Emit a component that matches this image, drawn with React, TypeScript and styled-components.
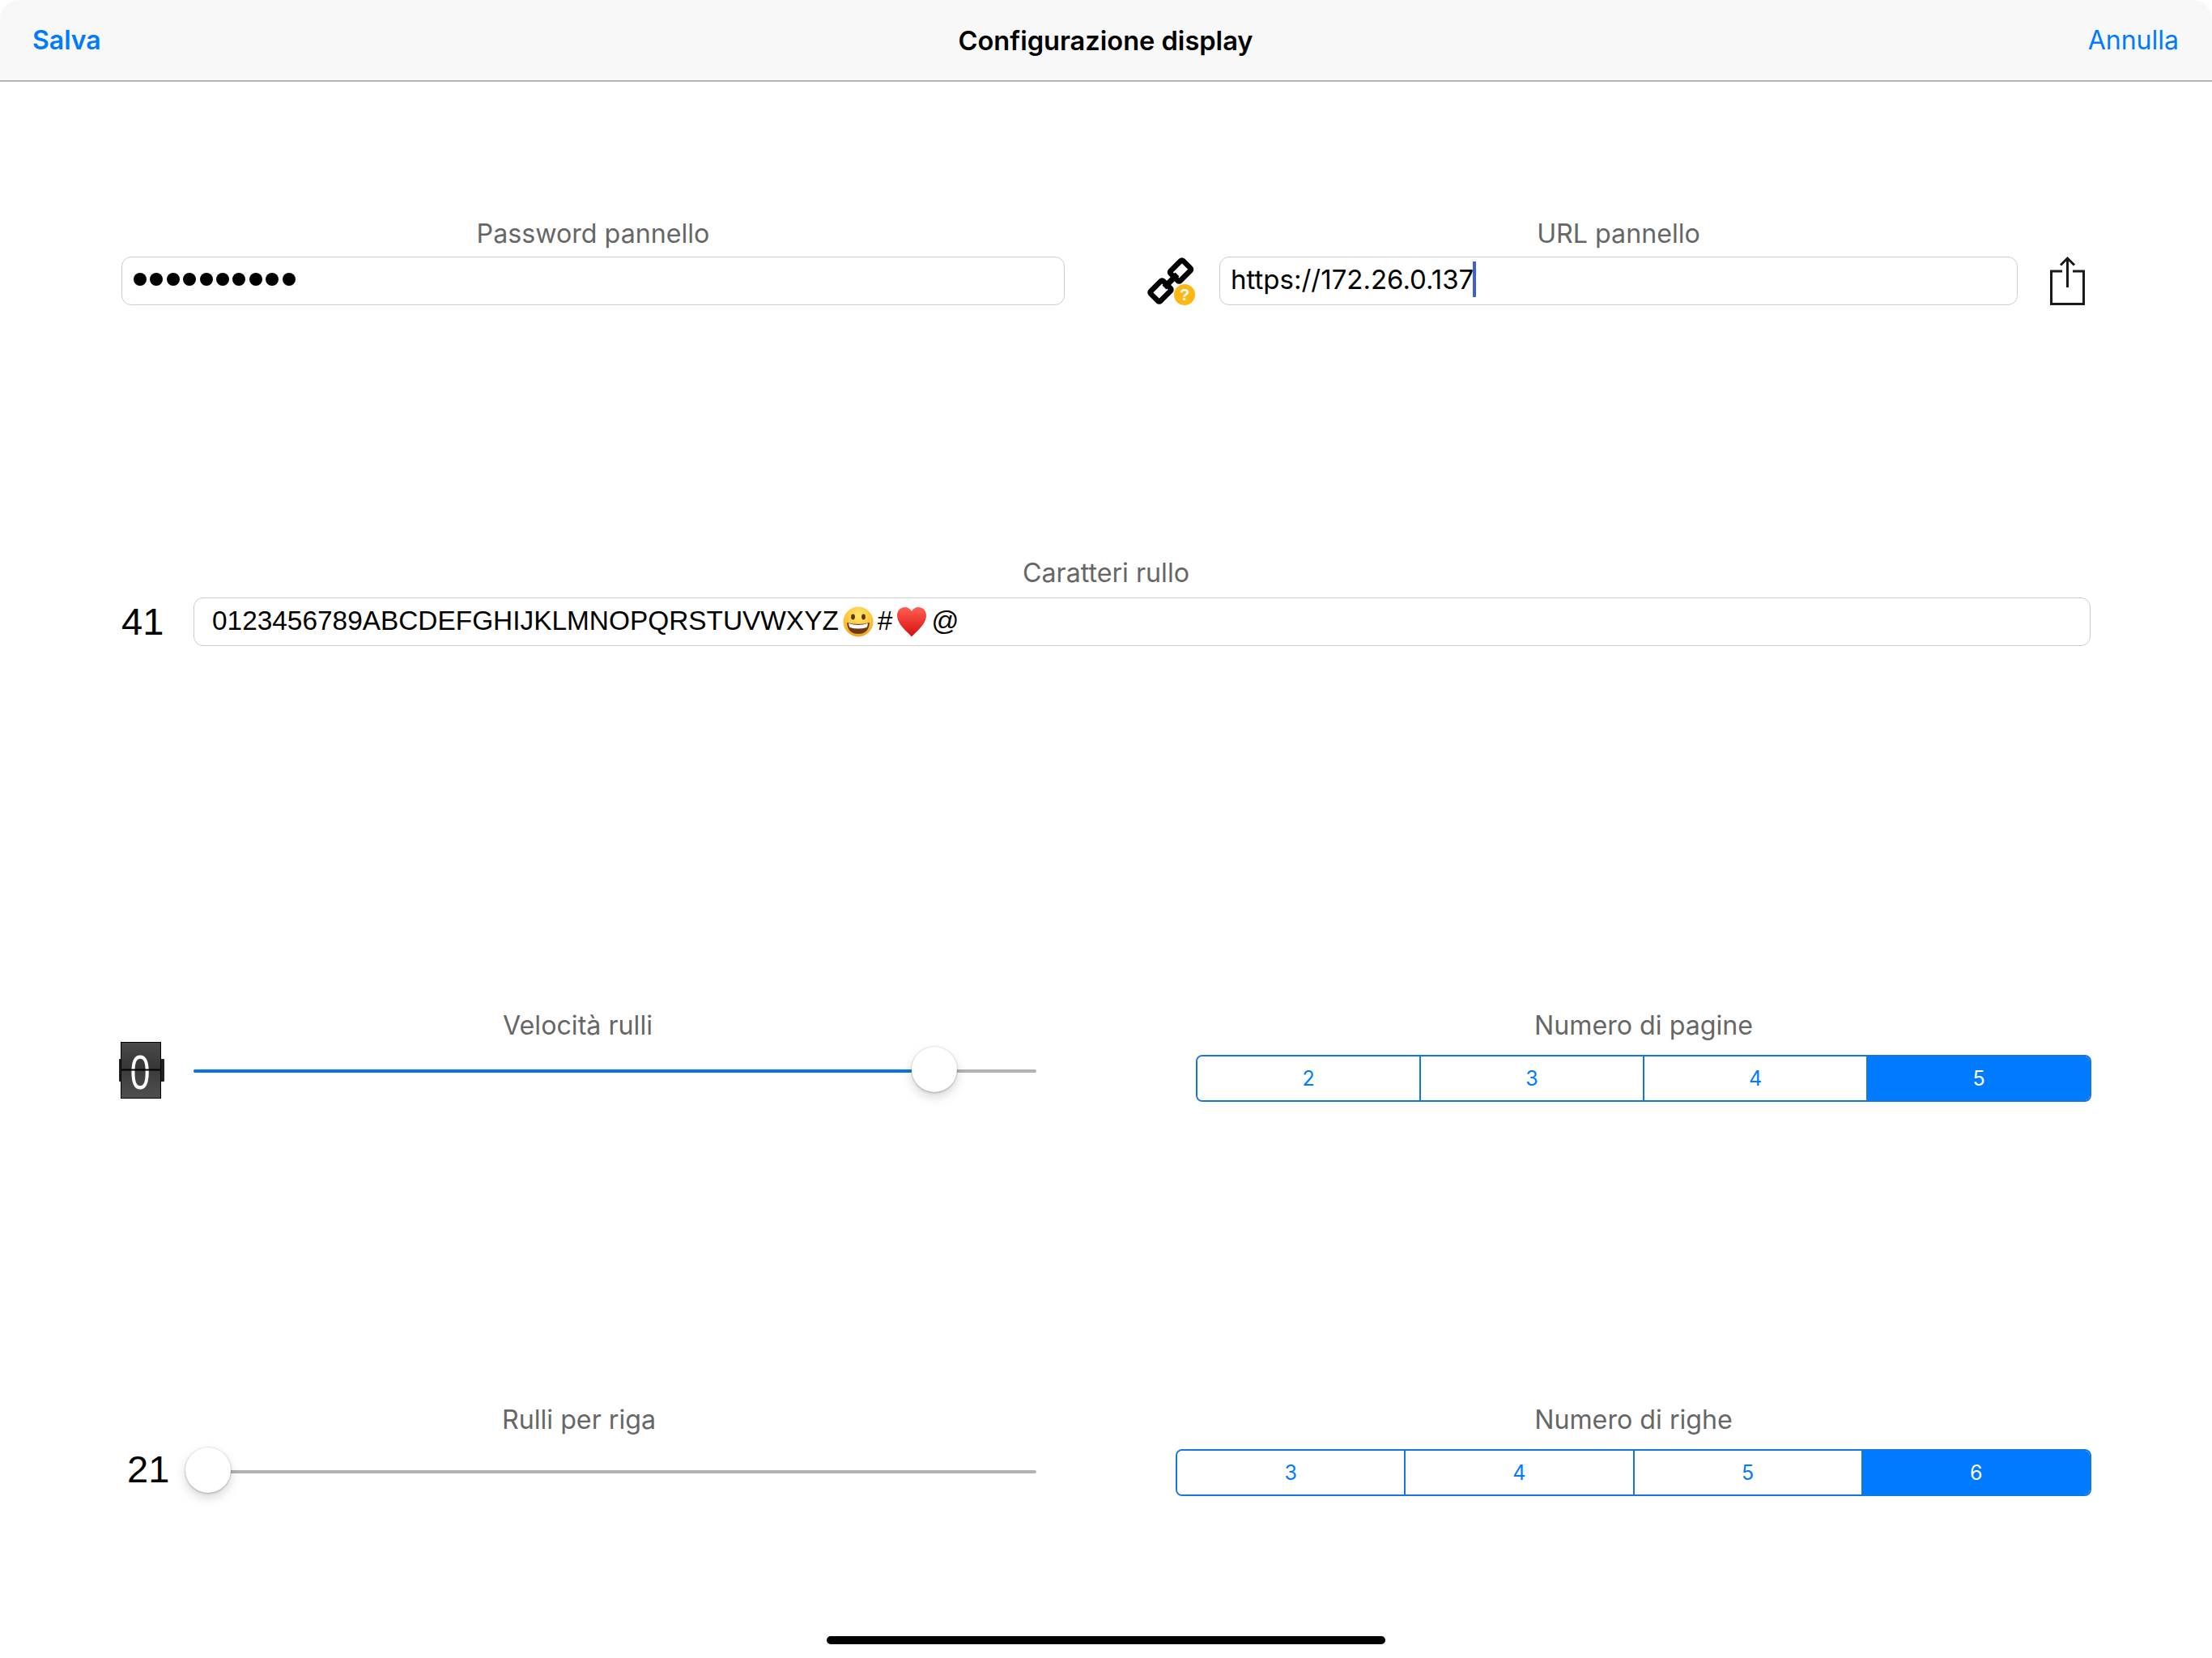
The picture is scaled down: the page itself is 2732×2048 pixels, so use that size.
import React from 'react';
import styled, { createGlobalStyle } from 'styled-components';

const sans = `Inter, "Noto Sans", sans-serif`;
const helvetica = `"Liberation Sans", Arial, sans-serif`;
const blue = '#007aff';

const GlobalStyle = createGlobalStyle`
  html, body {
    margin: 0;
    padding: 0;
    background: #fff;
  }
`;

const LinkIcon = () => (
  <IconSvg viewBox="0 0 60 60" width="60" height="60">
    <g fill="none" stroke="#000" strokeWidth="6.5">
      <rect x="-11" y="-8.5" width="22" height="17" rx="2" transform="translate(42 17.5) rotate(-45)" />
      <rect x="-11" y="-8.5" width="22" height="17" rx="2" transform="translate(17.5 42.5) rotate(-45)" />
    </g>
    <path d="M22 38 L38 22" stroke="#000" strokeWidth="7" />
    <circle cx="47" cy="47" r="13" fill="#fdb714" />
    <text x="47" y="54" textAnchor="middle" fontSize="20" fontWeight="700" fontFamily={helvetica} fill="#fff">?</text>
  </IconSvg>
);

const ShareIcon = () => (
  <IconSvg viewBox="0 0 43 60" width="43" height="60">
    <g fill="none" stroke="#1a1a1a" strokeWidth="3">
      <path d="M15 18 H1.5 V58.5 H41.5 V18 H28" />
      <path d="M21.5 38 V2" />
      <path d="M13 10.5 L21.5 2 L30 10.5" />
    </g>
  </IconSvg>
);

const FlipIcon = () => (
  <IconSvg viewBox="0 0 56 70" width="56" height="70">
    <defs>
      <linearGradient id="flipTop" x1="0" y1="0" x2="0" y2="1">
        <stop offset="0" stopColor="#4a4a4a" />
        <stop offset="1" stopColor="#353535" />
      </linearGradient>
      <linearGradient id="flipBottom" x1="0" y1="0" x2="0" y2="1">
        <stop offset="0" stopColor="#3c3c3c" />
        <stop offset="1" stopColor="#4f4f4f" />
      </linearGradient>
    </defs>
    <rect x="0" y="21" width="56" height="28" rx="1" fill="#222" />
    <rect x="2.5" y="0.5" width="49" height="34" fill="url(#flipTop)" stroke="#000" />
    <rect x="2.5" y="34.5" width="49" height="35" fill="url(#flipBottom)" stroke="#000" />
    <text transform="translate(26 58) scale(0.74 1)" textAnchor="middle" fontSize="60" fontFamily={helvetica} fill="#fff">0</text>
    <rect x="2" y="33.5" width="50" height="2" fill="#000" />
  </IconSvg>
);

const GrinEmoji = () => (
  <EmojiSvg viewBox="0 0 38 38">
    <defs>
      <radialGradient id="grinFace" cx="50%" cy="30%" r="75%">
        <stop offset="0" stopColor="#ffe56e" />
        <stop offset="0.6" stopColor="#fcc63d" />
        <stop offset="1" stopColor="#f09a20" />
      </radialGradient>
    </defs>
    <circle cx="19" cy="19" r="18.5" fill="url(#grinFace)" />
    <ellipse cx="12.5" cy="13" rx="2.4" ry="3.4" fill="#5a3a10" />
    <ellipse cx="25.5" cy="13" rx="2.4" ry="3.4" fill="#5a3a10" />
    <path d="M5 20 Q19 24 33 20 Q32 34 19 34 Q6 34 5 20 Z" fill="#6b3a14" />
    <path d="M7 21 Q19 25 31 21 Q30.5 25 29.5 26 Q19 29 8.5 26 Q7.5 25 7 21 Z" fill="#fff" />
  </EmojiSvg>
);

const HeartEmoji = () => (
  <EmojiSvg viewBox="0 0 38 38">
    <defs>
      <linearGradient id="heartFill" x1="0" y1="0" x2="0" y2="1">
        <stop offset="0" stopColor="#ff5f52" />
        <stop offset="1" stopColor="#d60d0d" />
      </linearGradient>
    </defs>
    <path
      d="M19 37.5 C12 30 1 22 1 11 C1 4.5 6 1 10.5 1 C14.5 1 17.5 3 19 6 C20.5 3 23.5 1 27.5 1 C32 1 37 4.5 37 11 C37 22 26 30 19 37.5 Z"
      fill="url(#heartFill)"
    />
  </EmojiSvg>
);

const Slider: React.FC<{ thumb: number; filled?: boolean; className?: string }> = ({ thumb, filled, className }) => (
  <SliderBox className={className}>
    <Track />
    {filled && <TrackFill $width={thumb} />}
    <Thumb $left={thumb} />
  </SliderBox>
);

const Segmented: React.FC<{ items: string[]; selected: string; width: number; top: number }> = ({ items, selected, width, top }) => (
  <SegmentBar $width={width} $top={top}>
    {items.map(item => (
      <Segment key={item} $active={item === selected}>{item}</Segment>
    ))}
  </SegmentBar>
);

const App: React.FC = () => {
  return (
    <Page>
      <GlobalStyle />
      <NavBar>
        <NavAction>Salva</NavAction>
        <NavTitle>Configurazione display</NavTitle>
        <NavCancel>Annulla</NavCancel>
      </NavBar>

      <ConnectionRow>
        <Field $width={1165}>
          <Label>Password pannello</Label>
          <PasswordInput>
            {Array.from({ length: 10 }).map((_, i) => <Dot key={i} />)}
          </PasswordInput>
        </Field>
        <LinkSlot><LinkIcon /></LinkSlot>
        <Field $width={986}>
          <Label>URL pannello</Label>
          <UrlInput>https://172.26.0.137<Caret /></UrlInput>
        </Field>
        <ShareSlot><ShareIcon /></ShareSlot>
      </ConnectionRow>

      <CharsRow>
        <Label>Caratteri rullo</Label>
        <CharsControl>
          <CountLabel>41</CountLabel>
          <CharsInput>
            0123456789ABCDEFGHIJKLMNOPQRSTUVWXYZ<GrinEmoji />#<HeartEmoji />@
          </CharsInput>
        </CharsControl>
      </CharsRow>

      <SpeedRow>
        <SpeedField>
          <Label>Velocità rulli</Label>
          <SpeedControl>
            <FlipIcon />
            <SpeedSlider thumb={887} filled />
          </SpeedControl>
        </SpeedField>
        <Field $width={1106}>
          <Label>Numero di pagine</Label>
          <Segmented items={['2', '3', '4', '5']} selected="5" width={1106} top={8} />
        </Field>
      </SpeedRow>

      <ReelsRow>
        <ReelsField>
          <Label>Rulli per riga</Label>
          <ReelsControl>
            <ReelCount>21</ReelCount>
            <Slider thumb={0} />
          </ReelsControl>
        </ReelsField>
        <Field $width={1131}>
          <Label>Numero di righe</Label>
          <Segmented items={['3', '4', '5', '6']} selected="6" width={1131} top={8} />
        </Field>
      </ReelsRow>

      <HomeBar />
    </Page>
  );
};

const Page = styled.div`
  width: 2732px;
  height: 2048px;
  display: flex;
  flex-direction: column;
  overflow: hidden;
  background: #fff;
  font-family: ${sans};
`;

const NavBar = styled.header`
  height: 101px;
  box-sizing: border-box;
  display: flex;
  align-items: center;
  justify-content: space-between;
  padding: 0 41px 0 40px;
  background: #f8f8f8;
  border-bottom: 2px solid #b4b4b4;
  border-radius: 24px 24px 0 0;
  font-size: 32px;
`;

const NavAction = styled.span`
  width: 300px;
  color: ${blue};
  font-weight: 600;
`;

const NavCancel = styled.span`
  width: 300px;
  text-align: right;
  color: ${blue};
`;

const NavTitle = styled.span`
  color: #000;
  font-size: 32.6px;
  font-weight: 600;
`;

const ConnectionRow = styled.section`
  display: flex;
  align-items: flex-end;
  margin: 167px 0 0 150px;
`;

const Field = styled.div<{ $width: number }>`
  width: ${p => p.$width}px;
  display: flex;
  flex-direction: column;
`;

const Label = styled.div`
  height: 40px;
  line-height: 42px;
  margin-bottom: 9px;
  text-align: center;
  font-size: 32.2px;
  color: #666;
`;

const LinkSlot = styled.div`
  margin-left: 101px;
  margin-right: 30px;
  height: 60px;
`;

const ShareSlot = styled.div`
  margin-left: 40px;
  height: 60px;
`;

const IconSvg = styled.svg`
  display: block;
  flex: none;
  overflow: visible;
`;

const EmojiSvg = styled.svg`
  flex: none;
  width: 38px;
  height: 38px;
  margin: 0 4px;
  position: relative;
  top: 1px;
`;

const InputBox = styled.div`
  height: 60px;
  box-sizing: border-box;
  display: flex;
  align-items: center;
  background: #fff;
  border: 1.5px solid #ccc;
  border-radius: 12px;
  color: #000;
`;

const PasswordInput = styled(InputBox)`
  gap: 4.4px;
  padding: 0 0 4px 14px;
`;

const Dot = styled.span`
  width: 16px;
  height: 16px;
  border-radius: 50%;
  background: #000;
`;

const UrlInput = styled(InputBox)`
  padding: 0 0 4px 13px;
  font-size: 33px;
`;

const Caret = styled.span`
  width: 4px;
  height: 44px;
  margin-left: -1px;
  background: #3f5fd8;
`;

const CharsRow = styled.section`
  margin: 310px 150px 0;
  ${Label} {
    margin-bottom: 11px;
  }
`;

const CharsControl = styled.div`
  display: flex;
  align-items: center;
`;

const CountLabel = styled.div`
  width: 89px;
  flex: none;
  padding-bottom: 2px;
  font-family: ${helvetica};
  font-size: 47px;
  color: #000;
`;

const CharsInput = styled(InputBox)`
  flex: 1;
  padding: 0 0 3px 22px;
  font-family: ${helvetica};
  font-size: 33.4px;
  ${EmojiSvg} {
    margin: 0 5px;
  }
`;

const SpeedRow = styled.section`
  display: flex;
  margin: 448px 149px 0 147px;
  justify-content: space-between;
`;

const SpeedField = styled.div`
  width: 1133px;
  ${Label} {
    margin-bottom: 1px;
  }
`;

const SpeedControl = styled.div`
  display: flex;
  gap: 36px;
`;

const SliderBox = styled.div`
  position: relative;
  flex: 1;
  height: 56px;
`;

const SpeedSlider = styled(Slider)`
  margin-top: 6px;
`;

const Track = styled.div`
  position: absolute;
  left: 0;
  right: 0;
  top: 28px;
  height: 4px;
  border-radius: 2px;
  background: #b2b2b2;
`;

const TrackFill = styled.div<{ $width: number }>`
  position: absolute;
  left: 0;
  top: 28px;
  width: ${p => p.$width}px;
  height: 4px;
  border-radius: 2px;
  background: #0a74e6;
`;

const Thumb = styled.div<{ $left: number }>`
  position: absolute;
  left: ${p => p.$left}px;
  top: 0;
  width: 56px;
  height: 56px;
  border-radius: 50%;
  background: #fff;
  box-shadow: 0 6px 14px rgba(0, 0, 0, 0.16), 0 1px 3px rgba(0, 0, 0, 0.22), 0 0 0 1px rgba(0, 0, 0, 0.04);
`;

const SegmentBar = styled.div<{ $width: number; $top: number }>`
  width: ${p => p.$width}px;
  height: 58px;
  box-sizing: border-box;
  margin-top: ${p => p.$top}px;
  display: flex;
  border: 2px solid #1477e0;
  border-radius: 8px;
  overflow: hidden;
  font-size: 25px;
`;

const Segment = styled.div<{ $active?: boolean }>`
  flex: 1;
  display: flex;
  align-items: center;
  justify-content: center;
  color: ${p => (p.$active ? '#fff' : blue)};
  background: ${p => (p.$active ? blue : '#fff')};
  & + & {
    border-left: 2px solid #1477e0;
  }
`;

const ReelsRow = styled.section`
  display: flex;
  justify-content: space-between;
  margin: 372px 149px 0 150px;
`;

const ReelsField = styled.div`
  width: 1130px;
  ${Label} {
    margin-bottom: 14px;
  }
`;

const ReelsControl = styled.div`
  display: flex;
  align-items: center;
`;

const ReelCount = styled.div`
  width: 72px;
  flex: none;
  margin-left: 7px;
  padding-bottom: 2px;
  font-family: ${helvetica};
  font-size: 47px;
  color: #000;
`;

const HomeBar = styled.div`
  width: 690px;
  height: 10px;
  flex: none;
  margin: auto auto 17px;
  border-radius: 5px;
  background: #000;
`;

export default App;
